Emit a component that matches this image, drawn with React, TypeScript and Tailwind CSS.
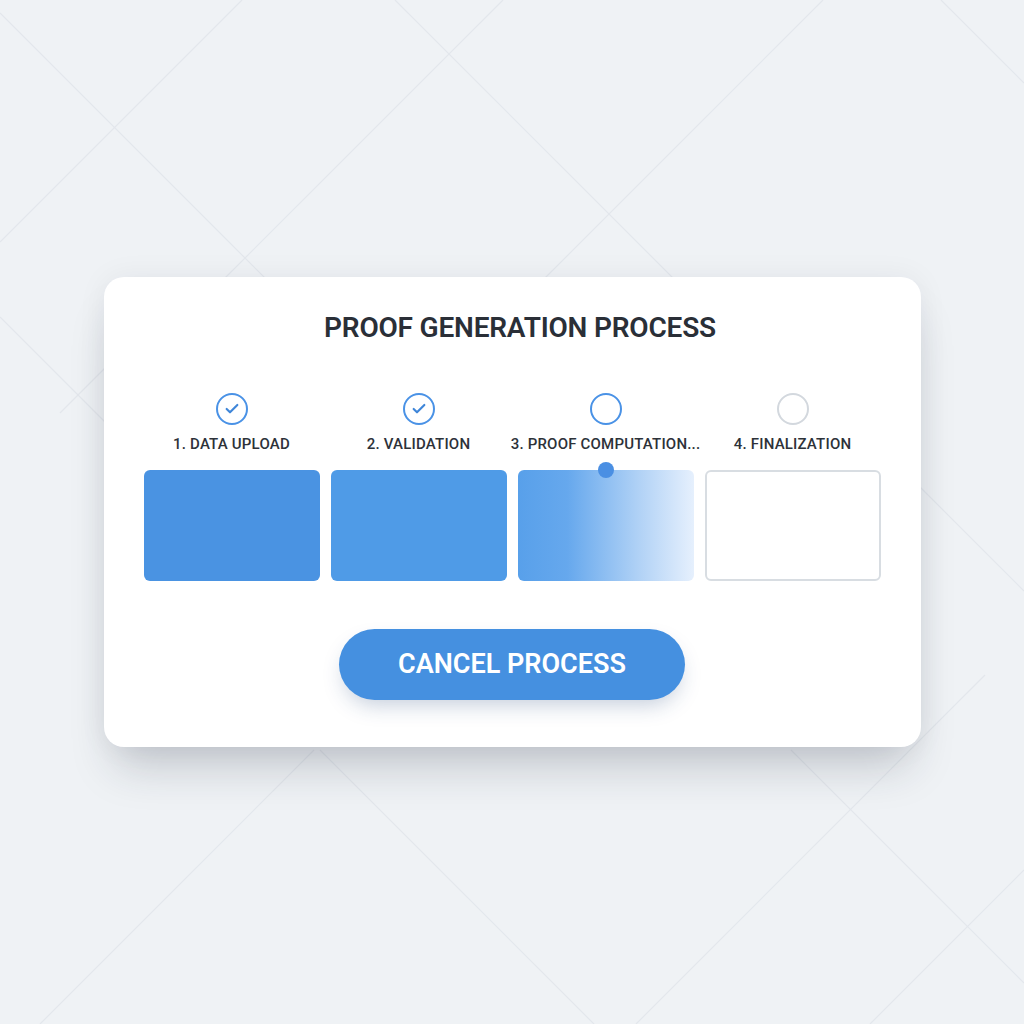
import { Check } from "lucide-react";

type Step = {
  label: string;
  state: "done" | "active" | "pending";
};

const steps: Step[] = [
  { label: "1. DATA UPLOAD", state: "done" },
  { label: "2. VALIDATION", state: "done" },
  { label: "3. PROOF COMPUTATION...", state: "active" },
  { label: "4. FINALIZATION", state: "pending" },
];

// faint diagonal lines in the backdrop
const lines: [number, number, number, number][] = [
  [0, 13, 272, 285],
  [242, 0, 0, 242],
  [395, 0, 680, 285],
  [503, 0, 225, 278],
  [823, 0, 545, 278],
  [941, 0, 1024, 83],
  [0, 317, 110, 427],
  [60, 413, 110, 363],
  [920, 487, 1024, 591],
  [314, 750, 40, 1024],
  [320, 750, 594, 1024],
  [791, 750, 1024, 983],
  [985, 675, 636, 1024],
  [1024, 870, 870, 1024],
];

function StepIcon({ state }: { state: Step["state"] }) {
  if (state === "pending") {
    return <div className="h-8 w-8 rounded-full border-[2.5px] border-[#d3d8de]" />;
  }
  return (
    <div className="flex h-8 w-8 items-center justify-center rounded-full border-[2.5px] border-[#4a92e6]">
      {state === "done" && <Check className="h-4 w-4 text-[#3f86d9]" strokeWidth={3.2} />}
    </div>
  );
}

function StepBlock({ state, index }: { state: Step["state"]; index: number }) {
  if (state === "pending") {
    return <div className="h-[111px] w-full rounded-md border-2 border-[#d8dde2] bg-white" />;
  }
  if (state === "active") {
    return (
      <div className="relative h-[111px] w-full rounded-md bg-[linear-gradient(to_right,#58a0ea_0%,#66a8ed_28%,#b3d3f6_70%,#e6f0fd_100%)]">
        <div className="absolute -top-2 left-1/2 h-4 w-4 -translate-x-1/2 rounded-full bg-[#4a8fe3]" />
      </div>
    );
  }
  return (
    <div
      className={
        index === 0
          ? "h-[111px] w-full rounded-md bg-[#4a93e2]"
          : "h-[111px] w-full rounded-md bg-[#4f9be7]"
      }
    />
  );
}

export default function App() {
  return (
    <div className="relative flex h-[1024px] w-[1024px] items-center justify-center overflow-hidden bg-[#eff2f5] font-['Roboto','Liberation_Sans',sans-serif]">
      <svg className="absolute inset-0 h-full w-full" viewBox="0 0 1024 1024">
        {lines.map(([x1, y1, x2, y2], i) => (
          <line key={i} x1={x1} y1={y1} x2={x2} y2={y2} stroke="#e3e7ec" strokeWidth="1.2" />
        ))}
      </svg>

      <div className="relative flex w-[817px] flex-col items-center rounded-[20px] bg-white px-10 pt-[35px] pb-[47px] shadow-[0_30px_45px_-12px_rgba(30,41,59,0.22),0_0_30px_rgba(30,41,59,0.06)]">
        <h1 className="ml-4 text-[28px] leading-8 font-semibold tracking-[-0.2px] text-[#2a2f37]">
          PROOF GENERATION PROCESS
        </h1>

        <div className="mt-[49px] grid w-full grid-cols-4 gap-[11px]">
          {steps.map((step, i) => (
            <div key={step.label} className="flex flex-col items-center">
              <StepIcon state={step.state} />
              <span className="mt-[9px] whitespace-nowrap text-[15px] leading-5 font-medium tracking-[0.2px] text-[#2d3239]">
                {step.label}
              </span>
              <div className="mt-4 w-full">
                <StepBlock state={step.state} index={i} />
              </div>
            </div>
          ))}
        </div>

        <button
          type="button"
          className="mt-12 h-[71px] w-[346px] rounded-full bg-[#4590e0] text-[27px] font-semibold text-white shadow-[0_10px_22px_-6px_rgba(30,64,120,0.28)]"
        >
          CANCEL PROCESS
        </button>
      </div>
    </div>
  );
}
